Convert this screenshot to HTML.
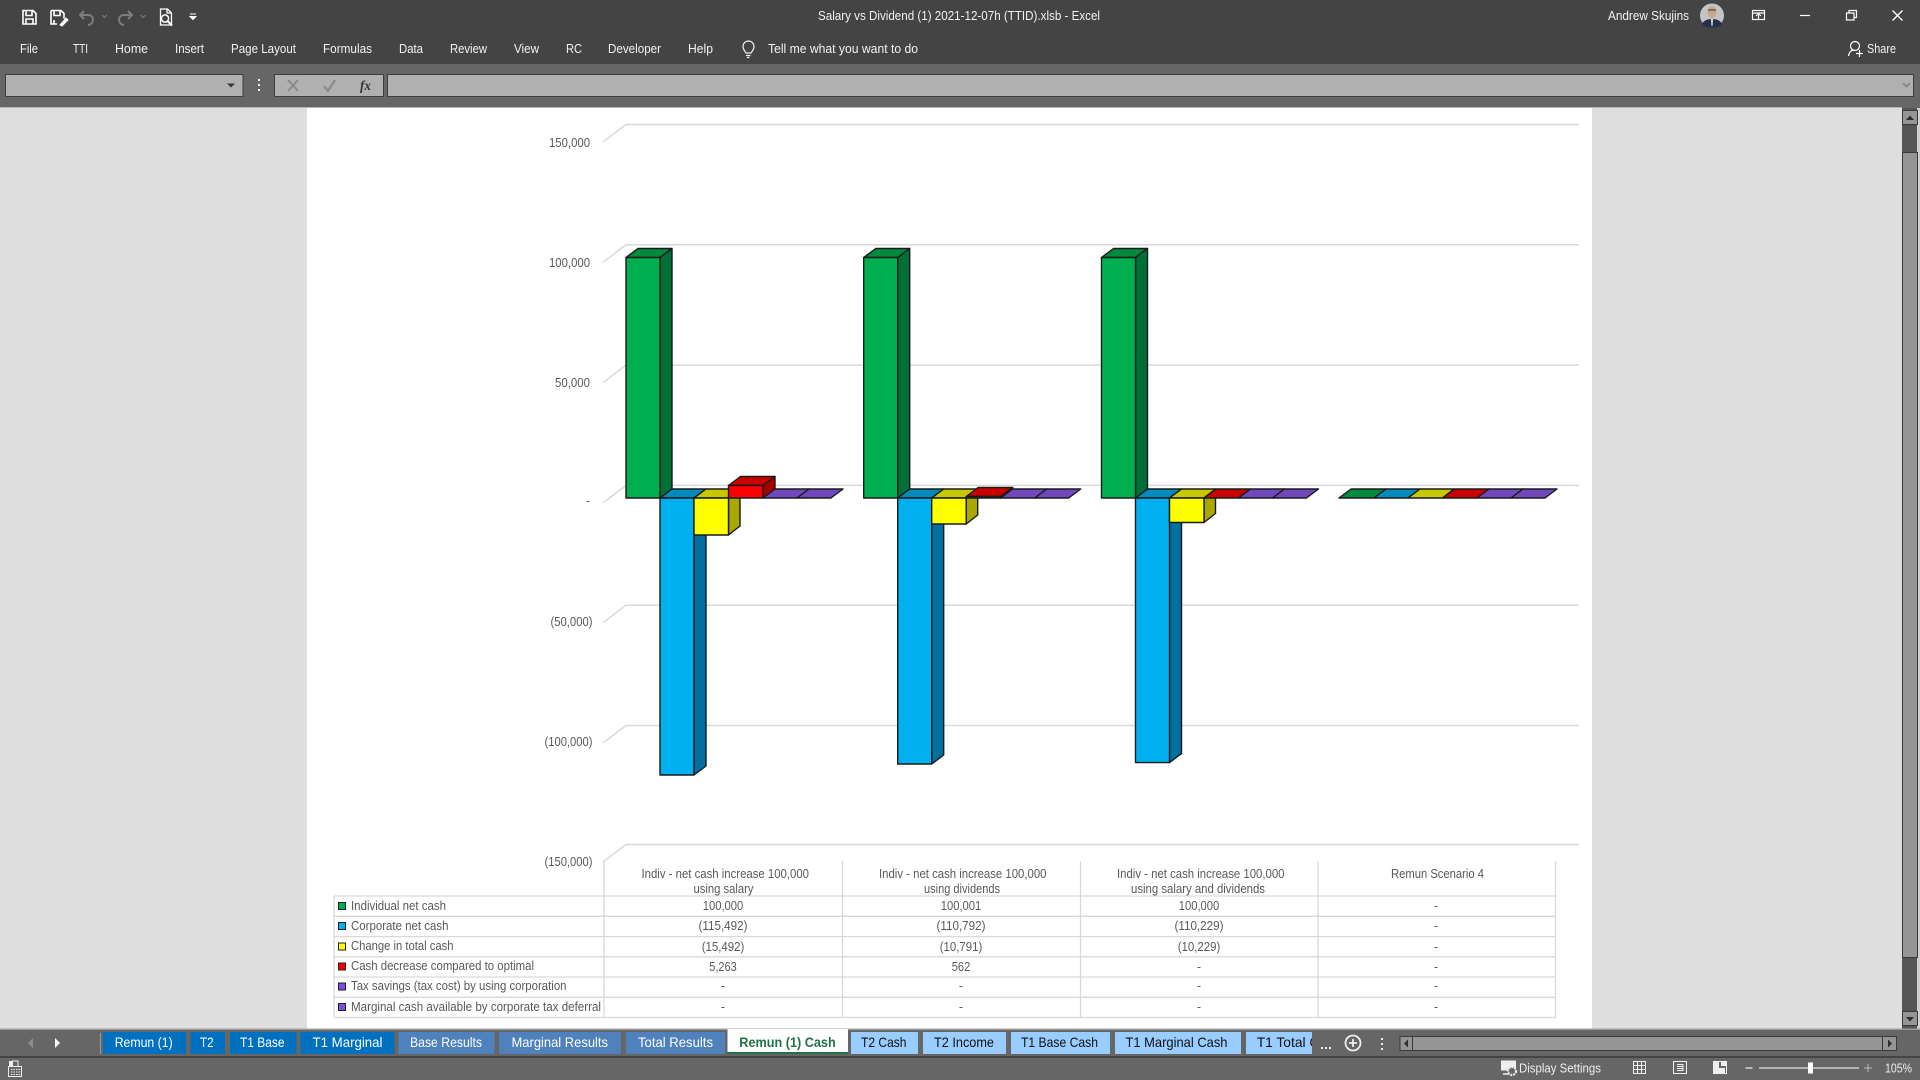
<!DOCTYPE html>
<html lang="en"><head><meta charset="utf-8"><title>Salary vs Dividend</title>
<style>
html,body{margin:0;padding:0;width:1920px;height:1080px;overflow:hidden;background:#666}
svg{display:block}
text{font-family:"Liberation Sans",sans-serif}
.m{font-size:12.5px;fill:#f2f2f2}
.c{font-size:12.5px;fill:#595959}
.t{font-size:14px;fill:#fff}
.d{font-size:14px;fill:#111}
.g{stroke:#d9d9d9;stroke-width:1.5;fill:none}
.tb{stroke:#d9d9d9;stroke-width:1.3;fill:none}
.b polygon,.b rect{stroke:#1a1a1a;stroke-width:1.4;stroke-linejoin:round}
</style></head><body>
<svg width="1920" height="1080" viewBox="0 0 1920 1080" xmlns="http://www.w3.org/2000/svg">
<defs>
<clipPath id="cl"><rect x="1246" y="1032" width="66" height="22"/></clipPath>
</defs>

<!-- top chrome -->
<rect x="0" y="0" width="1920" height="64" fill="#444"/>
<rect x="0" y="64" width="1920" height="44" fill="#666"/>
<rect x="5.500" y="74.500" width="237.500" height="22" fill="#b0b0b0" stroke="#3e3e3e" stroke-width="1"/>
<polygon points="227,83.500 235,83.500 231,87.500" fill="#333"/>
<g fill="#eee"><rect x="258" y="79" width="2" height="2"/><rect x="258" y="84" width="2" height="2"/><rect x="258" y="89" width="2" height="2"/></g>
<rect x="274.500" y="74.500" width="109" height="22" fill="#b0b0b0" stroke="#3e3e3e"/>
<path d="M288 80l10 11M298 80l-10 11" stroke="#8a8a8a" stroke-width="2" fill="none"/>
<path d="M324 86l4 5 7-11" stroke="#8a8a8a" stroke-width="2.200" fill="none"/>
<text x="360" y="90" font-size="14" font-style="italic" style="font-family:'Liberation Serif',serif;font-weight:bold" fill="#333" textLength="11" lengthAdjust="spacingAndGlyphs">fx</text>
<rect x="387.500" y="74.500" width="1526" height="22" fill="#b0b0b0" stroke="#3e3e3e"/>
<path d="M1903 83l3.500 3.500 3.500-3.500" stroke="#8a8a8a" stroke-width="2" fill="none"/>

<!-- QAT icons -->
<g fill="none" stroke="#fff" stroke-width="1.600">
<path d="M23 10.500h10l3 3v10.500H23zM26 10.500v5h6v-5M26 24v-5h7v5"/>
<path d="M51 10.500h10l3 3v5M51 10.500v13.500h6M54 10.500v5h6v-5M54 24v-4"/>
<path d="M60 25l6-7 2 2-6 6z" fill="#fff" stroke-width="1"/>
<path d="M160.500 9h7l4 4v12h-11zM167 9v4h4" stroke-width="1.300"/>
<circle cx="165" cy="18.500" r="3.600" stroke-width="1.500"/><path d="M168 21.500l4 4" stroke-width="2"/>
</g>
<g fill="none" stroke="#7d7d7d" stroke-width="2">
<path d="M84 11l-4 4 4 4M80 15h8c4 0 5 3 5 5s-2 5-5 5"/>
<path d="M128 11l4 4-4 4M132 15h-8c-4 0-5 3-5 5s2 5 5 5"/>
</g>
<path d="M102 15l2.500 2.500 2.500-2.500M140.500 15l2.500 2.500 2.500-2.500" stroke="#7d7d7d" fill="none"/>
<path d="M190 14h6M190 16.500h6l-3 3z" stroke="#fff" fill="#fff" stroke-width="1"/>

<!-- title -->
<text class="m" x="818" y="20" textLength="282" lengthAdjust="spacingAndGlyphs">Salary vs Dividend (1) 2021-12-07h (TTID).xlsb  -  Excel</text>
<text class="m" x="1608" y="20" textLength="81" lengthAdjust="spacingAndGlyphs">Andrew Skujins</text>
<circle cx="1712" cy="15.500" r="12" fill="#c4c4c4"/>
<path d="M1702 24c2-4 6-5 10-5s8 1 10 5c-3 3.500-7 3.500-10 3.500s-7 0-10-3.500z" fill="#27304a"/>
<ellipse cx="1712" cy="12" rx="4.500" ry="6" fill="#c9a88f"/>
<path d="M1708 10h8" stroke="#333"/><path d="M1711 19h2l-.5 7h-1z" fill="#e8e8e8"/>
<g fill="none" stroke="#fff" stroke-width="1.200">
<rect x="1752.500" y="10.500" width="12" height="9"/><path d="M1752 13h13M1758.500 19v-5M1756 16l2.500-2.500 2.500 2.500"/>
<path d="M1800 15.500h10"/>
<rect x="1846.500" y="13" width="7.500" height="7"/><path d="M1849 13v-2.500h7.500v7h-2.500"/>
<path d="M1892.500 10.500l10 10M1902.500 10.500l-10 10" stroke-width="1.300"/>
<circle cx="1855" cy="46" r="4.500"/><path d="M1848.500 56c.5-4 3-6 6-6M1856 53.500h7M1859.500 50v7"/>
</g>
<text class="m" x="1867" y="53" textLength="29" lengthAdjust="spacingAndGlyphs">Share</text>

<!-- menu -->
<text class="m" x="20" y="53" textLength="18" lengthAdjust="spacingAndGlyphs">File</text>
<text class="m" x="73" y="53" textLength="15" lengthAdjust="spacingAndGlyphs">TTI</text>
<text class="m" x="115" y="53" textLength="33" lengthAdjust="spacingAndGlyphs">Home</text>
<text class="m" x="175" y="53" textLength="29" lengthAdjust="spacingAndGlyphs">Insert</text>
<text class="m" x="231" y="53" textLength="65" lengthAdjust="spacingAndGlyphs">Page Layout</text>
<text class="m" x="323" y="53" textLength="49" lengthAdjust="spacingAndGlyphs">Formulas</text>
<text class="m" x="399" y="53" textLength="24" lengthAdjust="spacingAndGlyphs">Data</text>
<text class="m" x="450" y="53" textLength="37" lengthAdjust="spacingAndGlyphs">Review</text>
<text class="m" x="514" y="53" textLength="25" lengthAdjust="spacingAndGlyphs">View</text>
<text class="m" x="566" y="53" textLength="16" lengthAdjust="spacingAndGlyphs">RC</text>
<text class="m" x="608" y="53" textLength="53" lengthAdjust="spacingAndGlyphs">Developer</text>
<text class="m" x="688" y="53" textLength="25" lengthAdjust="spacingAndGlyphs">Help</text>
<path d="M746 53c-1-2-3-3-3-6.500a5.500 5.500 0 0 1 11 0c0 3.500-2 4.500-3 6.500zM746 55.500h4.500M747 57.500h2.500" fill="none" stroke="#eee" stroke-width="1.200"/>
<text class="m" x="768" y="53" textLength="150" lengthAdjust="spacingAndGlyphs">Tell me what you want to do</text>

<!-- sheet -->
<rect x="0" y="108" width="1902" height="921" fill="#dedede"/>
<rect x="0" y="107" width="1902" height="1" fill="#b5b5b5"/>
<rect x="307" y="108" width="1285" height="921" fill="#fff"/>

<!-- gridlines -->
<path class="g" d="M603 142L626 124.500H1579M603 262.300L626 244.800H1579M603 382.600L626 365.100H1579M603 502.900L626 485.400H1579M603 622.700L626 605.200H1579M603 743L626 725.500H1579M603 862L626 844.500H1579"/>

<!-- axis labels -->
<text class="c" x="549" y="147" textLength="41" lengthAdjust="spacingAndGlyphs">150,000</text>
<text class="c" x="549" y="267" textLength="41" lengthAdjust="spacingAndGlyphs">100,000</text>
<text class="c" x="555" y="387" textLength="35" lengthAdjust="spacingAndGlyphs">50,000</text>
<text class="c" x="586" y="505">-</text>
<text class="c" x="550.500" y="626" textLength="42" lengthAdjust="spacingAndGlyphs">(50,000)</text>
<text class="c" x="544.500" y="746" textLength="48" lengthAdjust="spacingAndGlyphs">(100,000)</text>
<text class="c" x="544.500" y="866" textLength="48" lengthAdjust="spacingAndGlyphs">(150,000)</text>

<!-- Group 1 -->
<g class="b">
<polygon points="626,257.500 638,248.500 672,248.500 660,257.500" fill="#008a3e"/><polygon points="660,257.500 672,248.500 672,489 660,498" fill="#006f38"/><rect x="626" y="257.500" width="34" height="240.500" fill="#00b050"/>
<polygon points="660,498 672,489 706,489 694,498" fill="#008abd"/><polygon points="694,498 706,489 706,766 694,775" fill="#0070a0"/><rect x="660" y="498" width="34" height="277" fill="#00b0f0"/>
<polygon points="694,498 706,489 740,489 728.500,498" fill="#c8c800"/><polygon points="728.500,498 740,489 740,526 728.500,535" fill="#a8a800"/><rect x="694" y="498" width="34.500" height="37" fill="#ff0"/>
<polygon points="728.500,485.500 740.500,476.500 775,476.500 763,485.500" fill="#c80000"/><polygon points="763,485.500 775,476.500 775,489 763,498" fill="#a60000"/><rect x="728.500" y="485.500" width="34.500" height="12.500" fill="#f00"/>
<polygon points="763,498 775,489 809,489 797,498" fill="#7048bb"/>
<polygon points="797,498 809,489 843,489 831,498" fill="#7048bb"/>
</g>
<!-- Group 2 -->
<g class="b" transform="translate(237.700 0)">
<polygon points="626,257.500 638,248.500 672,248.500 660,257.500" fill="#008a3e"/><polygon points="660,257.500 672,248.500 672,489 660,498" fill="#006f38"/><rect x="626" y="257.500" width="34" height="240.500" fill="#00b050"/>
<polygon points="660,498 672,489 706,489 694,498" fill="#008abd"/><polygon points="694,498 706,489 706,755 694,764" fill="#0070a0"/><rect x="660" y="498" width="34" height="266" fill="#00b0f0"/>
<polygon points="694,498 706,489 740,489 728.500,498" fill="#c8c800"/><polygon points="728.500,498 740,489 740,515 728.500,524" fill="#a8a800"/><rect x="694" y="498" width="34.500" height="26" fill="#ff0"/>
<polygon points="728.500,496.500 740.500,487.500 775,487.500 763,496.500" fill="#c80000"/><polygon points="763,496.500 775,487.500 775,489 763,498" fill="#a60000"/><rect x="728.500" y="496.500" width="34.500" height="1.500" fill="#f00"/>
<polygon points="763,498 775,489 809,489 797,498" fill="#7048bb"/>
<polygon points="797,498 809,489 843,489 831,498" fill="#7048bb"/>
</g>
<!-- Group 3 -->
<g class="b" transform="translate(475.500 0)">
<polygon points="626,257.500 638,248.500 672,248.500 660,257.500" fill="#008a3e"/><polygon points="660,257.500 672,248.500 672,489 660,498" fill="#006f38"/><rect x="626" y="257.500" width="34" height="240.500" fill="#00b050"/>
<polygon points="660,498 672,489 706,489 694,498" fill="#008abd"/><polygon points="694,498 706,489 706,753.600 694,762.600" fill="#0070a0"/><rect x="660" y="498" width="34" height="264.600" fill="#00b0f0"/>
<polygon points="694,498 706,489 740,489 728.500,498" fill="#c8c800"/><polygon points="728.500,498 740,489 740,513.500 728.500,522.500" fill="#a8a800"/><rect x="694" y="498" width="34.500" height="24.500" fill="#ff0"/>
<polygon points="728.500,498 740.500,489 775,489 763,498" fill="#c80000"/>
<polygon points="763,498 775,489 809,489 797,498" fill="#7048bb"/>
<polygon points="797,498 809,489 843,489 831,498" fill="#7048bb"/>
</g>
<!-- Group 4 -->
<g class="b" transform="translate(714 0)">
<polygon points="625,498 637,489 672,489 660,498" fill="#008a3e"/>
<polygon points="660,498 672,489 706,489 694,498" fill="#008abd"/>
<polygon points="694,498 706,489 740,489 728.500,498" fill="#c8c800"/>
<polygon points="728.500,498 740.500,489 775,489 763,498" fill="#c80000"/>
<polygon points="763,498 775,489 809,489 797,498" fill="#7048bb"/>
<polygon points="797,498 809,489 843,489 831,498" fill="#7048bb"/>
</g>

<!-- data table -->
<path class="tb" d="M604 861V1017.500M842.500 861V1017.500M1080.500 861V1017.500M1318 861V1017.500M1555.500 861V1017.500M334 896V1017.500M334 896H1555.500M334 916.300H1555.500M334 936.600H1555.500M334 956.800H1555.500M334 977H1555.500M334 997.300H1555.500M334 1017.500H1555.500"/>
<g stroke="#222" stroke-width="1">
<rect x="338.500" y="902.500" width="7" height="7" fill="#00b050"/>
<rect x="338.500" y="922.500" width="7" height="7" fill="#00b0f0"/>
<rect x="338.500" y="943" width="7" height="7" fill="#ff0"/>
<rect x="338.500" y="963" width="7" height="7" fill="#f00"/>
<rect x="338.500" y="983" width="7" height="7" fill="#7d4fe0"/>
<rect x="338.500" y="1003.500" width="7" height="7" fill="#7d4fe0"/>
</g>
<text class="c" x="351" y="910" textLength="95" lengthAdjust="spacingAndGlyphs">Individual net cash</text>
<text class="c" x="351" y="930" textLength="97.500" lengthAdjust="spacingAndGlyphs">Corporate net cash</text>
<text class="c" x="351" y="950" textLength="102.500" lengthAdjust="spacingAndGlyphs">Change in total cash</text>
<text class="c" x="351" y="970" textLength="183" lengthAdjust="spacingAndGlyphs">Cash decrease compared to optimal</text>
<text class="c" x="351" y="990" textLength="215.500" lengthAdjust="spacingAndGlyphs">Tax savings (tax cost) by using corporation</text>
<text class="c" x="351" y="1011" textLength="250" lengthAdjust="spacingAndGlyphs">Marginal cash available by corporate tax deferral</text>

<text class="c" x="641.500" y="878" textLength="167.500" lengthAdjust="spacingAndGlyphs">Indiv - net cash increase 100,000</text>
<text class="c" x="693.500" y="893" textLength="60" lengthAdjust="spacingAndGlyphs">using salary</text>
<text class="c" x="879" y="878" textLength="167.500" lengthAdjust="spacingAndGlyphs">Indiv - net cash increase 100,000</text>
<text class="c" x="924" y="893" textLength="76" lengthAdjust="spacingAndGlyphs">using dividends</text>
<text class="c" x="1117" y="878" textLength="167.500" lengthAdjust="spacingAndGlyphs">Indiv - net cash increase 100,000</text>
<text class="c" x="1131" y="893" textLength="134" lengthAdjust="spacingAndGlyphs">using salary and dividends</text>
<text class="c" x="1391" y="878" textLength="93" lengthAdjust="spacingAndGlyphs">Remun Scenario 4</text>

<g text-anchor="middle">
<text class="c" x="723" y="910" textLength="40.500" lengthAdjust="spacingAndGlyphs">100,000</text><text class="c" x="723" y="930" textLength="49" lengthAdjust="spacingAndGlyphs">(115,492)</text><text class="c" x="723" y="951" textLength="42.500" lengthAdjust="spacingAndGlyphs">(15,492)</text><text class="c" x="723" y="971" textLength="27.500" lengthAdjust="spacingAndGlyphs">5,263</text><text class="c" x="723" y="990">-</text><text class="c" x="723" y="1011">-</text>
<text class="c" x="961" y="910" textLength="40.500" lengthAdjust="spacingAndGlyphs">100,001</text><text class="c" x="961" y="930" textLength="49" lengthAdjust="spacingAndGlyphs">(110,792)</text><text class="c" x="961" y="951" textLength="42.500" lengthAdjust="spacingAndGlyphs">(10,791)</text><text class="c" x="961" y="971" textLength="18.500" lengthAdjust="spacingAndGlyphs">562</text><text class="c" x="961" y="990">-</text><text class="c" x="961" y="1011">-</text>
<text class="c" x="1199" y="910" textLength="40.500" lengthAdjust="spacingAndGlyphs">100,000</text><text class="c" x="1199" y="930" textLength="49" lengthAdjust="spacingAndGlyphs">(110,229)</text><text class="c" x="1199" y="951" textLength="42.500" lengthAdjust="spacingAndGlyphs">(10,229)</text><text class="c" x="1199" y="971">-</text><text class="c" x="1199" y="990">-</text><text class="c" x="1199" y="1011">-</text>
<text class="c" x="1436" y="910">-</text><text class="c" x="1436" y="930">-</text><text class="c" x="1436" y="951">-</text><text class="c" x="1436" y="971">-</text><text class="c" x="1436" y="990">-</text><text class="c" x="1436" y="1011">-</text>
</g>

<!-- vertical scrollbar -->
<rect x="1902" y="108" width="18" height="921" fill="#555"/>
<rect x="1917" y="108" width="3" height="921" fill="#cfcfcf"/>
<rect x="1902.500" y="110.500" width="15" height="14" fill="#959595" stroke="#3a3a3a"/>
<polygon points="1906,120 1914,120 1910,115.500" fill="#2e2e2e"/>
<rect x="1902.500" y="152.500" width="15" height="805" fill="#959595" stroke="#3a3a3a"/>
<rect x="1902.500" y="1011.500" width="15" height="14" fill="#959595" stroke="#3a3a3a"/>
<polygon points="1906,1017 1914,1017 1910,1021.500" fill="#2e2e2e"/>

<!-- tab strip -->
<rect x="0" y="1029" width="1920" height="51" fill="#666"/>
<rect x="0" y="1028.500" width="1920" height="1.500" fill="#9c9c9c"/>
<rect x="0" y="1056" width="1920" height="2" fill="#444"/>
<polygon points="33,1038 33,1048 28,1043" fill="#8f8f8f"/>
<polygon points="55,1038 55,1048 60,1043" fill="#fff"/>
<rect x="100" y="1033" width="1" height="21" fill="#999"/>

<g fill="#0070c0">
<rect x="103" y="1032" width="83" height="22"/><rect x="190.500" y="1032" width="34.500" height="22"/><rect x="230" y="1032" width="66.500" height="22"/><rect x="300.500" y="1032" width="94" height="22"/>
</g>
<g fill="#4f81bd">
<rect x="398.500" y="1032" width="96" height="22"/><rect x="499" y="1032" width="122" height="22"/><rect x="626" y="1032" width="99" height="22"/>
</g>
<rect x="727.500" y="1029" width="120.500" height="23" fill="#fff"/>
<rect x="727.500" y="1052" width="120.500" height="2" fill="#217346"/>
<g fill="#99ccff">
<rect x="851" y="1032" width="67" height="22"/><rect x="923" y="1032" width="83" height="22"/><rect x="1011" y="1032" width="99" height="22"/><rect x="1115" y="1032" width="126" height="22"/><rect x="1246" y="1032" width="66" height="22"/>
</g>
<text class="t" x="114.700" y="1047" textLength="58" lengthAdjust="spacingAndGlyphs">Remun (1)</text>
<text class="t" x="200" y="1047" textLength="13.500" lengthAdjust="spacingAndGlyphs">T2</text>
<text class="t" x="240" y="1047" textLength="44.500" lengthAdjust="spacingAndGlyphs">T1 Base</text>
<text class="t" x="312.500" y="1047" textLength="70" lengthAdjust="spacingAndGlyphs">T1 Marginal</text>
<text class="t" x="410" y="1047" textLength="72" lengthAdjust="spacingAndGlyphs">Base Results</text>
<text class="t" x="511.500" y="1047" textLength="96.500" lengthAdjust="spacingAndGlyphs">Marginal Results</text>
<text class="t" x="638" y="1047" textLength="75" lengthAdjust="spacingAndGlyphs">Total Results</text>
<text x="739.300" y="1047" font-size="14" font-weight="bold" fill="#217346" textLength="96.400" lengthAdjust="spacingAndGlyphs">Remun (1) Cash</text>
<text class="d" x="861" y="1047" textLength="45.500" lengthAdjust="spacingAndGlyphs">T2 Cash</text>
<text class="d" x="934" y="1047" textLength="60" lengthAdjust="spacingAndGlyphs">T2 Income</text>
<text class="d" x="1021" y="1047" textLength="77" lengthAdjust="spacingAndGlyphs">T1 Base Cash</text>
<text class="d" x="1125.500" y="1047" textLength="102" lengthAdjust="spacingAndGlyphs">T1 Marginal Cash</text>
<g clip-path="url(#cl)"><text class="d" x="1256.700" y="1047" textLength="85" lengthAdjust="spacingAndGlyphs">T1 Total Cash</text></g>
<g fill="#eee"><rect x="1321" y="1047" width="2" height="2"/><rect x="1325" y="1047" width="2" height="2"/><rect x="1329" y="1047" width="2" height="2"/>
<rect x="1381" y="1038" width="2" height="2"/><rect x="1381" y="1043" width="2" height="2"/><rect x="1381" y="1048" width="2" height="2"/></g>
<circle cx="1353" cy="1043" r="7.500" fill="none" stroke="#eee" stroke-width="1.800"/>
<path d="M1349 1043h8M1353 1039v8" stroke="#eee" stroke-width="1.800"/>

<!-- h scrollbar -->
<rect x="1400" y="1036.500" width="496.500" height="14" fill="#959595" stroke="#3a3a3a"/>
<path d="M1412.500 1036v15M1882.500 1036v15" stroke="#3a3a3a"/>
<polygon points="1408,1039.500 1408,1047.500 1404,1043.500" fill="#2e2e2e"/>
<polygon points="1888,1039.500 1888,1047.500 1892,1043.500" fill="#2e2e2e"/>

<!-- status bar -->
<g fill="none" stroke="#eee" stroke-width="1">
<path d="M12 1061h6v5M8.500 1066.500h13v10h-13z"/>
<path d="M11 1069.500h9M11 1072h9M11 1074.500h9" stroke-dasharray="1.500 1"/>
</g>
<rect x="9" y="1061" width="4" height="5" fill="#eee"/>
<rect x="1501" y="1060.500" width="15" height="10" fill="#eee"/>
<path d="M1503 1074h6" stroke="#eee" stroke-width="1.500"/>
<circle cx="1512" cy="1071" r="4" fill="#666" stroke="#eee" stroke-width="2.200" stroke-dasharray="2 1"/>
<text x="1519" y="1072.500" font-size="13" fill="#eee" textLength="82" lengthAdjust="spacingAndGlyphs">Display Settings</text>
<path d="M1633.500 1061.500h12v12h-12zM1633.500 1065.500h12M1633.500 1069.500h12M1637.500 1061.500v12M1641.500 1061.500v12" fill="none" stroke="#eee"/>
<path d="M1673.500 1061.500h13v12h-13zM1677 1064.500h6v6h-6M1677 1066.500h6M1677 1068.500h6" fill="none" stroke="#eee"/>
<path d="M1713.500 1061.500h13v12h-13z" fill="none" stroke="#eee"/>
<path d="M1714 1062h5v6h6v5h-11zM1721 1062h5v4h-5z" fill="#eee"/>
<path d="M1745.500 1068h7" stroke="#eee" stroke-width="1.200"/>
<path d="M1759 1068h100" stroke="#fff" stroke-width="1"/>
<rect x="1808" y="1062.500" width="5" height="11" fill="#fff"/>
<path d="M1864 1068h8M1868 1064v8" stroke="#bbb" stroke-width="1"/>
<text x="1885" y="1072.500" font-size="12.500" fill="#eee" textLength="27" lengthAdjust="spacingAndGlyphs">105%</text>
</svg>
</body></html>
